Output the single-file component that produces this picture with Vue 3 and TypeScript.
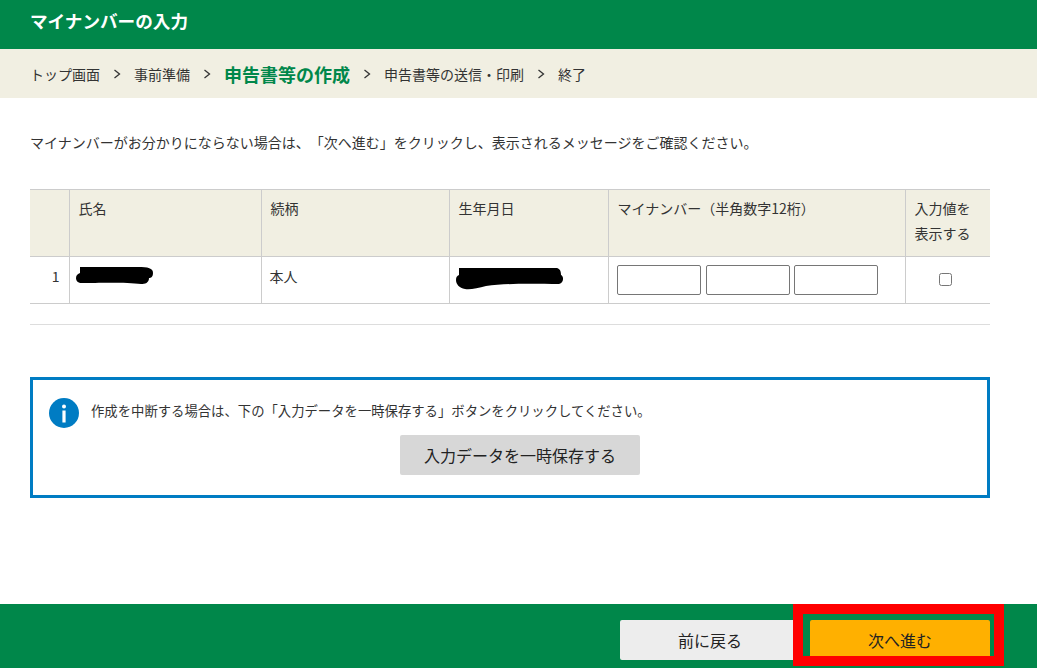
<template>
  <div class="page">
    <header class="title-bar">
      <h1>マイナンバーの入力</h1>
    </header>

    <nav class="steps">
      <template v-for="(step, i) in steps" :key="step.label">
        <span v-if="i > 0" class="chev">
          <svg width="8" height="10" viewBox="0 0 8 10"><path d="M1.5 1 L6.5 5 L1.5 9" fill="none" stroke="#333" stroke-width="1.3" /></svg>
        </span>
        <span class="step" :class="{ current: step.current }">{{ step.label }}</span>
      </template>
    </nav>

    <main class="content">
      <p class="lead">マイナンバーがお分かりにならない場合は、「次へ進む」をクリックし、表示されるメッセージをご確認ください。</p>

      <table class="grid">
        <colgroup>
          <col class="c-num" />
          <col class="c-name" />
          <col class="c-rel" />
          <col class="c-birth" />
          <col class="c-mynum" />
          <col class="c-show" />
        </colgroup>
        <thead>
          <tr>
            <th></th>
            <th>氏名</th>
            <th>続柄</th>
            <th>生年月日</th>
            <th>マイナンバー（半角数字12桁）</th>
            <th>入力値を<br />表示する</th>
          </tr>
        </thead>
        <tbody>
          <tr>
            <td class="num">1</td>
            <td class="redact-cell">
              <svg class="redact name" width="78" height="20" viewBox="0 0 78 20"><path d="M4 1 H62 C72 1 77 2 77 7 C77 11 75 12 73 12 C73 17 69 18 65 18 C50 16 20 17 6 17 C2 17 0 15 0 12 C0 9 2 8 4 7 Z" fill="#000" /></svg>
            </td>
            <td class="rel">本人</td>
            <td class="redact-cell">
              <svg class="redact birth" width="109" height="24" viewBox="0 0 109 24"><path d="M3 1 H100 C103 1 105 3 105 8 C108 9 108 16 103 17 C80 17 50 16 30 19 C22 21 14 23 9 22 C3 21 0 17 0 13 C0 10 1 9 3 8 Z" fill="#000" /></svg>
            </td>
            <td class="mynum">
              <div class="inputs">
                <input type="text" />
                <input type="text" />
                <input type="text" />
              </div>
            </td>
            <td class="check"><input type="checkbox" /></td>
          </tr>
        </tbody>
      </table>
      <div class="rule"></div>

      <section class="notice">
        <div class="notice-msg">
          <svg width="30" height="30" viewBox="0 0 30 30">
            <circle cx="15" cy="15" r="15" fill="#007cc3" />
            <circle cx="15" cy="8.5" r="2" fill="#fff" />
            <rect x="13.4" y="12.5" width="3.2" height="12" fill="#fff" />
          </svg>
          <p>作成を中断する場合は、下の「入力データを一時保存する」ボタンをクリックしてください。</p>
        </div>
        <button class="btn save" type="button">入力データを一時保存する</button>
      </section>
    </main>

    <footer class="foot">
      <button class="btn back" type="button">前に戻る</button>
      <button class="btn next" type="button">次へ進む</button>
      <div class="highlight"></div>
    </footer>
  </div>
</template>

<script setup lang="ts">
interface Step {
  label: string
  current?: boolean
}

const steps: Step[] = [
  { label: 'トップ画面' },
  { label: '事前準備' },
  { label: '申告書等の作成', current: true },
  { label: '申告書等の送信・印刷' },
  { label: '終了' }
]
</script>

<style>
html, body { margin: 0; background: #fff; }
</style>

<style scoped>
.page {
  position: relative;
  height: 668px;
  overflow: hidden;
  display: flex;
  flex-direction: column;
  font-family: "Noto Sans CJK JP", "Liberation Sans", sans-serif;
  font-size: 14px;
  color: #333;
  text-spacing-trim: space-all;
}

.title-bar {
  height: 49px;
  flex: none;
  background: #00874a;
  padding: 0 30px;
  box-sizing: border-box;
}
.title-bar h1 {
  margin: 0;
  font-size: 17.6px;
  line-height: 42px;
  font-weight: 700;
  color: #fff;
}

.steps {
  height: 49px;
  flex: none;
  background: #f1efe2;
  display: flex;
  align-items: center;
  padding: 0 30px;
  box-sizing: border-box;
}
.step { white-space: nowrap; }
.step.current {
  font-size: 18px;
  font-weight: 700;
  color: #00874a;
}
.chev {
  width: 34px;
  display: flex;
  justify-content: center;
}

.content {
  flex: 1;
  padding: 0 47px 0 30px;
}
.lead {
  margin: 34px 0 0;
  line-height: 20px;
}

.grid {
  margin-top: 37px;
  width: 960px;
  table-layout: fixed;
  border-collapse: collapse;
  border-top: 1px solid #ccc;
  border-bottom: 1px solid #ccc;
}
.c-num { width: 39px; }
.c-name { width: 192px; }
.c-rel { width: 188px; }
.c-birth { width: 159px; }
.c-mynum { width: 297px; }
.c-show { width: 85px; }

.grid th {
  height: 67px;
  box-sizing: border-box;
  background: #f1efe2;
  font-weight: 400;
  text-align: left;
  vertical-align: top;
  padding: 6px 8px 0 9px;
  line-height: 25px;
  border-bottom: 1px solid #ccc;
}
.grid td {
  height: 47px;
  box-sizing: border-box;
  padding: 0 0 0 8px;
  vertical-align: middle;
}
.grid th + th, .grid td + td { border-left: 1px solid #ccc; }
.grid td.num {
  text-align: right;
  padding: 0 9px 8px 0;
}
.grid td.rel { padding: 0 0 8px 8px; }
.grid td.mynum { padding: 0 0 1px 8px; }
.redact-cell { position: relative; }
.redact { position: absolute; display: block; }
.redact.name { left: 6px; top: 9px; }
.redact.birth { left: 6px; top: 10px; }

.inputs {
  display: flex;
  gap: 5px;
}
.inputs input {
  width: 84px;
  height: 30px;
  box-sizing: border-box;
  margin: 0;
  padding: 0 4px;
  border: 1px solid #767676;
  border-radius: 2px;
  background: #fff;
}
.inputs input:nth-child(3) { margin-left: -1px; }
.grid td.check {
  text-align: center;
  padding: 0 5px 5px 0;
}
.check input {
  width: 13px;
  height: 13px;
  margin: 0;
  vertical-align: middle;
}

.rule {
  width: 960px;
  height: 1px;
  background: #ddd;
  margin-top: 20px;
}

.notice {
  width: 960px;
  height: 121px;
  margin-top: 52px;
  box-sizing: border-box;
  border: 3px solid #007cc3;
  padding: 18px 16px 0;
  display: flex;
  flex-direction: column;
  align-items: center;
}
.notice-msg {
  align-self: stretch;
  display: flex;
  align-items: center;
  gap: 12px;
}
.notice-msg p {
  margin: 0;
  font-size: 13.35px;
  line-height: 20px;
  position: relative;
  top: -2px;
}

.btn {
  font-family: inherit;
  border: 0;
  border-radius: 2px;
  height: 40px;
  font-size: 16px;
  color: #222;
  padding: 0;
}
.save {
  width: 240px;
  margin: 7px 0 0 20px;
  background: #d7d7d7;
}

.foot {
  position: relative;
  height: 64px;
  flex: none;
  background: #00874a;
  display: flex;
  justify-content: flex-end;
  align-items: flex-start;
  gap: 10px;
  padding: 16px 47px 0 0;
  box-sizing: border-box;
}
.back { width: 180px; background: #ededed; }
.next { width: 180px; background: #ffb000; }
.highlight {
  position: absolute;
  left: 793px;
  top: 0;
  width: 211px;
  height: 62px;
  box-sizing: border-box;
  border: 10px solid #f00;
  pointer-events: none;
}
</style>
